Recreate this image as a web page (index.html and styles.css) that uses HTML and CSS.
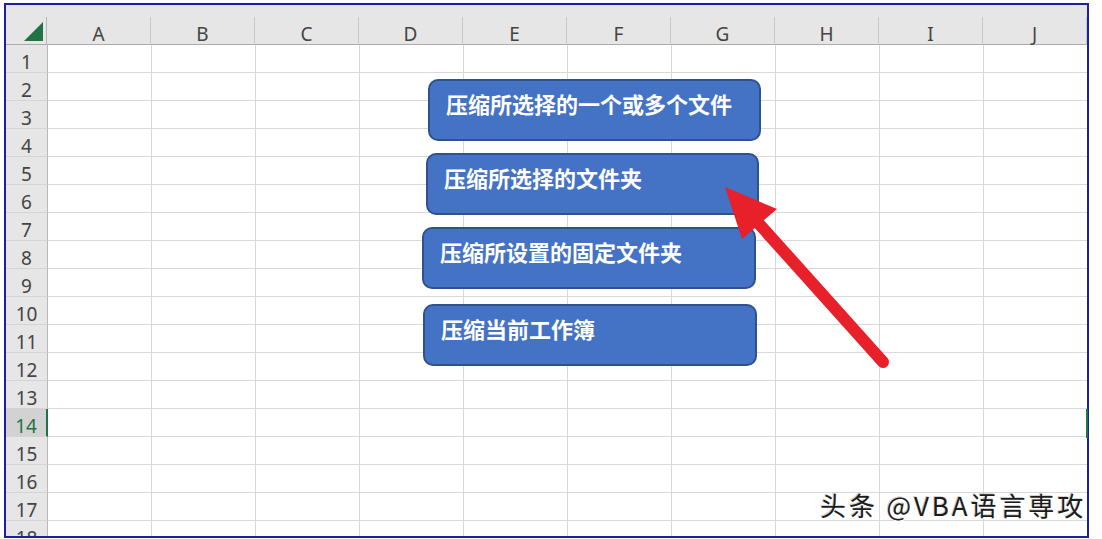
FILE: index.html
```html
<!DOCTYPE html>
<html lang="zh">
<head>
<meta charset="utf-8">
<title>Excel</title>
<link rel="stylesheet" href="styles.css">
</head>
<body>
<div class="frame">
  <div class="strip"></div>
  <div class="colhead">
    <div class="corner"><svg class="tri" width="19" height="19" viewBox="0 0 19 19"><polygon points="19,0 19,19 0,19" fill="#217346"/></svg></div>
    <div class="ch">A</div><div class="ch">B</div><div class="ch">C</div><div class="ch">D</div><div class="ch">E</div>
    <div class="ch">F</div><div class="ch">G</div><div class="ch">H</div><div class="ch">I</div><div class="ch">J</div>
  </div>
  <div class="body">
    <div class="rowhead">
      <div class="rh">1</div><div class="rh">2</div><div class="rh">3</div><div class="rh">4</div><div class="rh">5</div>
      <div class="rh">6</div><div class="rh">7</div><div class="rh">8</div><div class="rh">9</div><div class="rh">10</div>
      <div class="rh">11</div><div class="rh">12</div><div class="rh">13</div><div class="rh sel">14</div><div class="rh">15</div>
      <div class="rh">16</div><div class="rh">17</div><div class="rh">18</div>
    </div>
    <div class="cells"></div>
  </div>
</div>

<div class="btn b1">压缩所选择的一个或多个文件</div>
<div class="btn b2">压缩所选择的文件夹</div>
<div class="btn b3">压缩所设置的固定文件夹</div>
<div class="btn b4">压缩当前工作簿</div>

<svg class="arrow" width="200" height="210" viewBox="0 0 200 210">
  <line x1="52" y1="46" x2="183" y2="192" stroke="#e8202a" stroke-width="12" stroke-linecap="round"/>
  <polygon points="25,17 77,39 42,69" fill="#e8202a"/>
</svg>

<div class="active"></div>
<div class="mark">头条 @VBA语言専攻</div>
</body>
</html>
```
FILE: styles.css
```css
html, body {
  margin: 0;
  padding: 0;
  background: #ffffff;
}
body {
  position: relative;
  width: 1102px;
  height: 539px;
  overflow: hidden;
  font-family: "Noto Sans", "Liberation Sans", "Noto Sans CJK SC", sans-serif;
}
.frame {
  margin: 3px 0 0 4px;
  width: 1081px;
  height: 531px;
  border: 2px solid #1f1f9c;
  overflow: hidden;
  background: #ffffff;
}
.strip {
  height: 12px;
  background: #e6e6e6;
}
.colhead {
  display: flex;
  height: 28px;
}
.corner {
  width: 42px;
  height: 28px;
  box-sizing: border-box;
  background: #e6e6e6;
  border-right: 1px solid #b8b8b8;
  border-bottom: 1px solid #ababab;
  display: flex;
  align-items: flex-end;
  justify-content: flex-end;
  padding: 0 3px 3px 0;
}
.tri {
  display: block;
}
.ch {
  width: 104px;
  flex: none;
  height: 28px;
  box-sizing: border-box;
  background: #e6e6e6;
  border-right: 1px solid #c8c8c8;
  border-bottom: 1px solid #ababab;
  color: #444444;
  font-size: 19px;
  line-height: 27px;
  padding-top: 4px;
  text-align: center;
}
.body {
  display: flex;
}
.rowhead {
  width: 42px;
  flex: none;
  display: flex;
  flex-direction: column;
}
.rh {
  height: 28px;
  box-sizing: border-box;
  background: #e6e6e6;
  border-right: 1px solid #b8b8b8;
  border-bottom: 1px solid #d4d4d4;
  color: #444444;
  font-size: 19px;
  line-height: 26px;
  padding-top: 4px;
  text-align: center;
}
.rh.sel {
  background: #d2d2d2;
  color: #217346;
  border-right: 2px solid #217346;
}
.cells {
  width: 1040px;
  flex: none;
  height: 504px;
  background-image:
    linear-gradient(to left, #d9d9d9 1px, transparent 1px),
    linear-gradient(to top, #d9d9d9 1px, transparent 1px);
  background-size: 104px 28px, 104px 28px;
}
.btn {
  position: absolute;
  box-sizing: border-box;
  height: 62px;
  background: #4472c4;
  border: 2px solid #2f528f;
  border-radius: 10px;
  color: #ffffff;
  font-family: "Noto Sans CJK SC", sans-serif;
  font-weight: 700;
  font-size: 22px;
  line-height: 30px;
  padding: 7px 0 0 16px;
  white-space: nowrap;
}
.b1 { left: 428px; top: 79px; width: 333px; }
.b2 { left: 426px; top: 153px; width: 333px; }
.b3 { left: 422px; top: 227px; width: 334px; }
.b4 { left: 423px; top: 304px; width: 334px; }
.arrow {
  position: absolute;
  left: 700px;
  top: 170px;
}
.active {
  position: absolute;
  left: 1086px;
  top: 409px;
  width: 2px;
  height: 29px;
  background: #217346;
}
.mark {
  position: absolute;
  left: 820px;
  top: 489px;
  font-family: "Noto Sans CJK SC", sans-serif;
  font-size: 26px;
  letter-spacing: 2.9px;
  line-height: 32px;
  color: #1c1c1c;
  white-space: nowrap;
  text-shadow: 1px 1px 0 rgba(255,255,255,0.95), -1px -1px 0 rgba(120,120,120,0.35);
}
```
